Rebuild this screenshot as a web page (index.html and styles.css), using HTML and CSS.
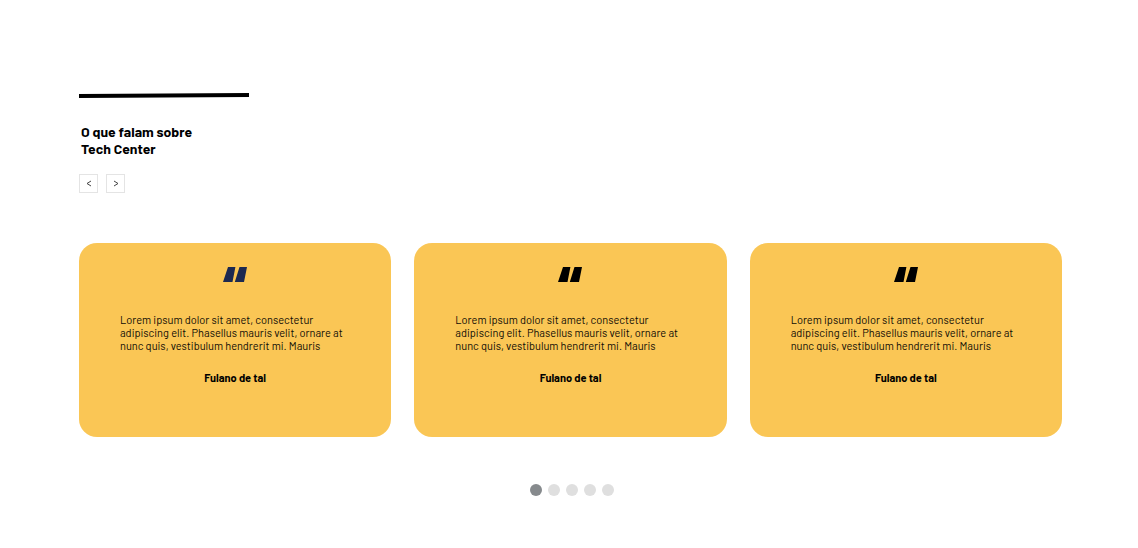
FILE: index.html
```html
<!DOCTYPE html>
<html lang="pt-BR">
<head>
<meta charset="utf-8">
<meta name="viewport" content="width=device-width, initial-scale=1">
<title>Tech Center</title>
<link rel="stylesheet" href="styles.css">
</head>
<body>
<main class="testimonials">
  <svg class="rule" viewBox="0 0 170 5" aria-hidden="true"><path d="M0 1 170 0V4L0 5Z"/></svg>
  <h1 class="title">O que falam sobre<br>Tech Center</h1>
  <div class="arrows">
    <button class="arrow" type="button" aria-label="Anterior"><svg class="chevron" viewBox="0 0 6 8" aria-hidden="true"><path d="M5 1 1 3.500 5 6"/></svg></button>
    <button class="arrow" type="button" aria-label="Próximo"><svg class="chevron" viewBox="0 0 6 8" aria-hidden="true"><path d="M1 1 5 3.500 1 6"/></svg></button>
  </div>
  <div class="cards">
    <article class="card">
      <svg class="quote quote-navy" viewBox="0 0 24 15" aria-hidden="true"><path d="M5 0H12.400L9.500 15H0ZM16.500 0H24L21 15H11.800Z"/></svg>
      <p class="text">Lorem ipsum dolor sit amet, consectetur<br>adipiscing elit. Phasellus mauris velit, ornare at<br>nunc quis, vestibulum hendrerit mi. Mauris</p>
      <p class="author">Fulano de tal</p>
    </article>
    <article class="card">
      <svg class="quote" viewBox="0 0 24 15" aria-hidden="true"><path d="M5 0H12.400L9.500 15H0ZM16.500 0H24L21 15H11.800Z"/></svg>
      <p class="text">Lorem ipsum dolor sit amet, consectetur<br>adipiscing elit. Phasellus mauris velit, ornare at<br>nunc quis, vestibulum hendrerit mi. Mauris</p>
      <p class="author">Fulano de tal</p>
    </article>
    <article class="card">
      <svg class="quote" viewBox="0 0 24 15" aria-hidden="true"><path d="M5 0H12.400L9.500 15H0ZM16.500 0H24L21 15H11.800Z"/></svg>
      <p class="text">Lorem ipsum dolor sit amet, consectetur<br>adipiscing elit. Phasellus mauris velit, ornare at<br>nunc quis, vestibulum hendrerit mi. Mauris</p>
      <p class="author">Fulano de tal</p>
    </article>
  </div>
  <nav class="dots" aria-label="Depoimentos">
    <button class="dot dot-active" type="button" aria-label="Página 1" aria-current="true"></button>
    <button class="dot" type="button" aria-label="Página 2"></button>
    <button class="dot" type="button" aria-label="Página 3"></button>
    <button class="dot" type="button" aria-label="Página 4"></button>
    <button class="dot" type="button" aria-label="Página 5"></button>
  </nav>
</main>
</body>
</html>
```

FILE: styles.css
```css
* {
  box-sizing: border-box;
}

body {
  margin: 0;
  background: #fff;
  color: #000;
  font-family: Barlow, Roboto, sans-serif;
}

.testimonials {
  padding: 93px 76px 52px 79px;
}

.rule {
  display: block;
  width: 170px;
  height: 5px;
}

.title {
  margin: 25px 0 0 2px;
  font-size: 14px;
  line-height: 17px;
  font-weight: 700;
}

.arrows {
  display: flex;
  gap: 8px;
  margin-top: 17px;
}

.arrow {
  display: flex;
  align-items: center;
  justify-content: center;
  width: 19px;
  height: 19px;
  padding: 0;
  border: 1px solid #e4e4e4;
  background: #fff;
}

.chevron {
  width: 6px;
  height: 8px;
  fill: none;
  stroke: #444;
  stroke-width: 1;
}

.cards {
  display: grid;
  grid-template-columns: repeat(3, 1fr);
  gap: 23px;
  margin-top: 50px;
}

.card {
  display: flex;
  flex-direction: column;
  align-items: center;
  padding: 24px 41px 53px;
  border-radius: 18px;
  background: #fac655;
}

.quote {
  width: 24px;
  height: 15px;
}

.quote-navy {
  fill: #1c2950;
}

.text {
  align-self: stretch;
  margin: 31px 0 0;
  color: #0f0c05;
  font-size: 11px;
  line-height: 13px;
}

.author {
  margin: 19px 0 0;
  font-size: 11px;
  line-height: 13px;
  font-weight: 700;
}

.dots {
  display: flex;
  justify-content: center;
  gap: 6px;
  margin-top: 47px;
  padding-left: 2px;
}

.dot {
  width: 12px;
  height: 12px;
  padding: 0;
  border: 0;
  border-radius: 50%;
  background: #dfdfdf;
}

.dot-active {
  background: #868a8d;
}
```
